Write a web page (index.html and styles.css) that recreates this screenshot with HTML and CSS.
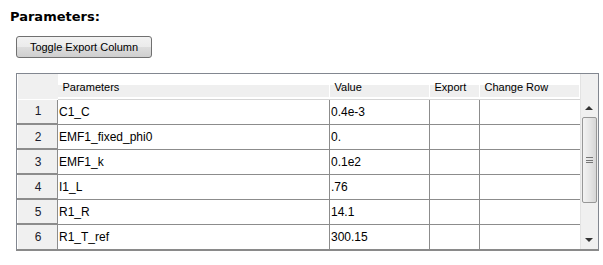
FILE: index.html
```html
<!DOCTYPE html>
<html lang="en">
<head>
<meta charset="utf-8"/>
<title>Parameters</title>
<link rel="stylesheet" href="styles.css">
</head>
<body>
<h1 class="title">Parameters:</h1>
<button type="button" class="toggle">Toggle Export Column</button>

<div class="frame">
  <table class="grid">
    <thead>
      <tr>
        <th class="corner"></th>
        <th class="col-name"><span>Parameters</span></th>
        <th class="col-value"><span>Value</span></th>
        <th class="col-export"><span>Export</span></th>
        <th class="col-change"><span>Change Row</span></th>
      </tr>
    </thead>
    <tbody>
      <tr><td class="num">1</td><td>C1_C</td><td>0.4e-3</td><td></td><td></td></tr>
      <tr><td class="num">2</td><td>EMF1_fixed_phi0</td><td>0.</td><td></td><td></td></tr>
      <tr><td class="num">3</td><td>EMF1_k</td><td>0.1e2</td><td></td><td></td></tr>
      <tr><td class="num">4</td><td>I1_L</td><td>.76</td><td></td><td></td></tr>
      <tr><td class="num">5</td><td>R1_R</td><td>14.1</td><td></td><td></td></tr>
      <tr><td class="num">6</td><td>R1_T_ref</td><td>300.15</td><td></td><td></td></tr>
    </tbody>
  </table>

  <!-- barre de défilement -->
  <div class="scrollbar">
    <div class="head-fill"></div>
    <div class="arrow up"></div>
    <div class="thumb"><div class="grip"></div></div>
    <div class="track"></div>
    <div class="arrow down"></div>
  </div>
</div>
</body>
</html>
```

FILE: styles.css
```css
:root{--line:#8c8c8c;--head:#f0f0f0;--text:#000;}
*{box-sizing:border-box;}
body{margin:0;background:#fff;color:var(--text);font-family:"Liberation Sans",Arial,sans-serif;font-size:11px;}
.title{margin:0;padding:9px 0 0 10px;height:28px;font-family:"DejaVu Sans",Verdana,sans-serif;font-size:13px;font-weight:bold;line-height:16px;}
.toggle{display:block;margin:8px 0 0 16px;width:136px;height:22px;padding:0;border:1px solid #707070;border-radius:3px;background:linear-gradient(#f2f2f2 0%,#ebebeb 50%,#dddddd 51%,#cfcfcf 100%);font-family:"Liberation Sans",Arial,sans-serif;font-size:11px;color:#000;}

.frame{display:flex;margin:15px 0 0 16px;width:583px;height:178px;border:1px solid #828790;border-bottom:2px solid #8a8a8a;}
.grid{border-collapse:collapse;table-layout:fixed;width:562px;}
.grid th{height:25px;padding:0;font-weight:normal;text-align:left;background:linear-gradient(#fff 0,#fff 11px,#efefef 11px,#efefef 23px,#fff 23px);border-bottom:1px solid #d5d5d5;}
.grid th span{display:block;padding:3px 0 0 5px;border-right:1px solid #fff;height:22px;line-height:18px;}
.grid th.corner{background:var(--head);width:40px;border-bottom:1px solid #fff;}
.col-name{width:272px;}
.col-value{width:100px;}
.col-export{width:50px;}
.col-change{width:100px;}
.grid td{height:25px;padding:0 0 0 1px;font-size:12px;border:1px solid var(--line);border-top:none;white-space:nowrap;overflow:hidden;}
.grid td:first-child{border-left:none;}
.grid td:last-child{border-right:none;}
.grid tbody tr:last-child td{border-bottom:none;}
.grid td.num{background:var(--head);color:#1a1a2a;text-align:center;border-top:1px solid #fff;border-left:1px solid #fff;border-bottom:2px solid var(--line);}

.scrollbar{flex:1;display:flex;flex-direction:column;background:#f0f0f0;border-left:1px solid #e3e3e3;}
.head-fill{height:25px;}
.arrow{height:18px;display:flex;align-items:center;justify-content:center;}
.arrow::after{content:"";border-left:4px solid transparent;border-right:4px solid transparent;}
.up::after{border-bottom:4px solid #333;}
.down::after{border-top:4px solid #333;}
.thumb{height:86px;margin:0 1px;border:1px solid #979797;border-radius:2px;background:linear-gradient(90deg,#f3f3f3,#e6e6e6 50%,#d6d6d6);display:flex;align-items:center;justify-content:center;}
.grip{width:7px;height:6px;border-top:1px solid #777;border-bottom:1px solid #777;position:relative;}
.grip::after{content:"";position:absolute;left:0;right:0;top:2px;border-top:1px solid #777;}
.track{flex:1;}
```
